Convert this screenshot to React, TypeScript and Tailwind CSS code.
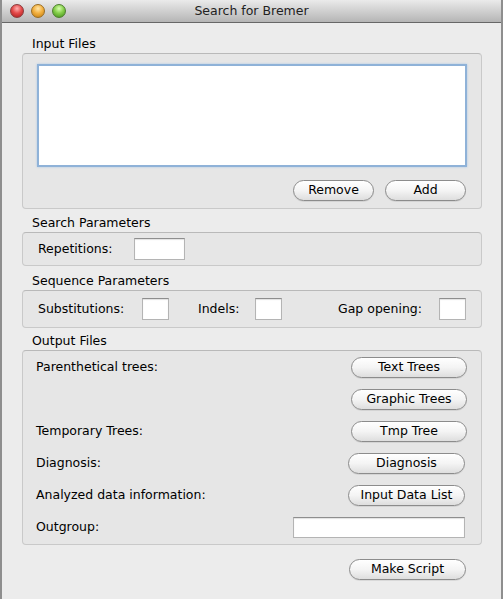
import React from 'react';

const FONT = { fontFamily: '"DejaVu Sans", "Liberation Sans", sans-serif' };

/* ── Aqua push button ─────────────────────────────────── */
const AquaButton = ({ label, w }: { label: string; w: string }) => (
  <button
    className={`${w} h-[21px] rounded-full border border-[#8c8c8c] bg-gradient-to-b from-[#ffffff] via-[#f4f4f4] to-[#dedede] text-[12.5px] text-black leading-none flex items-center justify-center shadow-[0_1px_0_rgba(0,0,0,0.08)]`}
  >
    {label}
  </button>
);

/* ── Plain text field ─────────────────────────────────── */
const Field = ({ w, h = 'h-[22px]' }: { w: string; h?: string }) => (
  <div className={`${w} ${h} bg-white border border-[#b4b4b4] border-t-[#8e8e8e] shadow-[inset_0_1px_1px_rgba(0,0,0,0.12)]`} />
);

/* ── Group label + box ────────────────────────────────── */
const Group = ({ title, children, box }: { title: string; children: React.ReactNode; box: string }) => (
  <div>
    <div className="h-[17px] pl-[10px] flex items-center text-[12.5px] text-black">{title}</div>
    <div className={`border border-[#c9c9c9] border-t-[#b9b9b9] rounded-[4px] bg-[#e6e6e6] ${box}`}>{children}</div>
  </div>
);

export default function App() {
  return (
    <div
      className="w-[503px] h-[599px] bg-[#ececec] border-x-2 border-[#8e8e8e] overflow-hidden flex flex-col"
      style={FONT}
    >
      {/* ── Title bar ───────────────────────────────── */}
      <div className="h-[23px] shrink-0 bg-gradient-to-b from-[#ebebeb] to-[#b5b5b5] border-b border-[#676767] flex items-center relative">
        <div className="flex items-center gap-[7px] pl-[8px]">
          <span className="w-[14px] h-[14px] rounded-full border border-[#8a3b3b] bg-[radial-gradient(circle_at_50%_30%,#ffb0b0_0%,#e44a4a_45%,#a81818_100%)]" />
          <span className="w-[14px] h-[14px] rounded-full border border-[#9a6d22] bg-[radial-gradient(circle_at_50%_30%,#ffe6a8_0%,#f3b141_45%,#c17a0c_100%)]" />
          <span className="w-[14px] h-[14px] rounded-full border border-[#4d7f2e] bg-[radial-gradient(circle_at_50%_30%,#d8ffb0_0%,#86cf4b_45%,#3f8c17_100%)]" />
        </div>
        <div className="absolute inset-0 flex items-center justify-center text-[12.5px] text-[#222] pointer-events-none">
          Search for Bremer
        </div>
      </div>

      {/* ── Content ─────────────────────────────────── */}
      <div className="pt-[13px] pl-[20px] pr-[19px] flex flex-col">
        <Group title="Input Files" box="h-[156px] pt-[10px] px-[14px]">
          <div className="h-[103px] bg-white border-2 border-[#8fb2d8] shadow-[0_0_2px_#a9c6e6]" />
          <div className="flex justify-end gap-[11px] mt-[13px] pr-[1px]">
            <AquaButton label="Remove" w="w-[81px]" />
            <AquaButton label="Add" w="w-[81px]" />
          </div>
        </Group>

        <div className="mt-[6px]">
          <Group title="Search Parameters" box="h-[34px] pl-[15px] flex items-center">
            <span className="text-[12.5px] w-[96px]">Repetitions:</span>
            <Field w="w-[51px]" />
          </Group>
        </div>

        <div className="mt-[7px]">
          <Group title="Sequence Parameters" box="h-[38px] pl-[15px] pr-[15px] flex items-center">
            <span className="text-[12.5px] w-[104px]">Substitutions:</span>
            <Field w="w-[27px]" />
            <span className="text-[12.5px] ml-[29px] w-[57px]">Indels:</span>
            <Field w="w-[27px]" />
            <span className="text-[12.5px] ml-auto mr-[17px]">Gap opening:</span>
            <Field w="w-[27px]" />
          </Group>
        </div>

        <div className="mt-[5px]">
          <Group title="Output Files" box="h-[195px] pl-[13px] pr-[14px] flex flex-col">
            <div className="h-[32px] flex items-center justify-between">
              <span className="text-[12.5px]">Parenthetical trees:</span>
              <AquaButton label="Text Trees" w="w-[116px]" />
            </div>
            <div className="h-[32px] flex items-center justify-end">
              <AquaButton label="Graphic Trees" w="w-[116px]" />
            </div>
            <div className="h-[32px] flex items-center justify-between">
              <span className="text-[12.5px]">Temporary Trees:</span>
              <AquaButton label="Tmp Tree" w="w-[116px]" />
            </div>
            <div className="h-[32px] flex items-center justify-between">
              <span className="text-[12.5px]">Diagnosis:</span>
              <div className="pr-[2px]">
                <AquaButton label="Diagnosis" w="w-[117px]" />
              </div>
            </div>
            <div className="h-[32px] flex items-center justify-between">
              <span className="text-[12.5px]">Analyzed data information:</span>
              <div className="pr-[2px]">
                <AquaButton label="Input Data List" w="w-[117px]" />
              </div>
            </div>
            <div className="h-[32px] flex items-center justify-between">
              <span className="text-[12.5px]">Outgroup:</span>
              <div className="pr-[2px]">
                <Field w="w-[172px]" h="h-[21px]" />
              </div>
            </div>
          </Group>
        </div>

        <div className="flex justify-end mt-[14px] pr-[16px]">
          <AquaButton label="Make Script" w="w-[117px]" />
        </div>
      </div>
    </div>
  );
}
